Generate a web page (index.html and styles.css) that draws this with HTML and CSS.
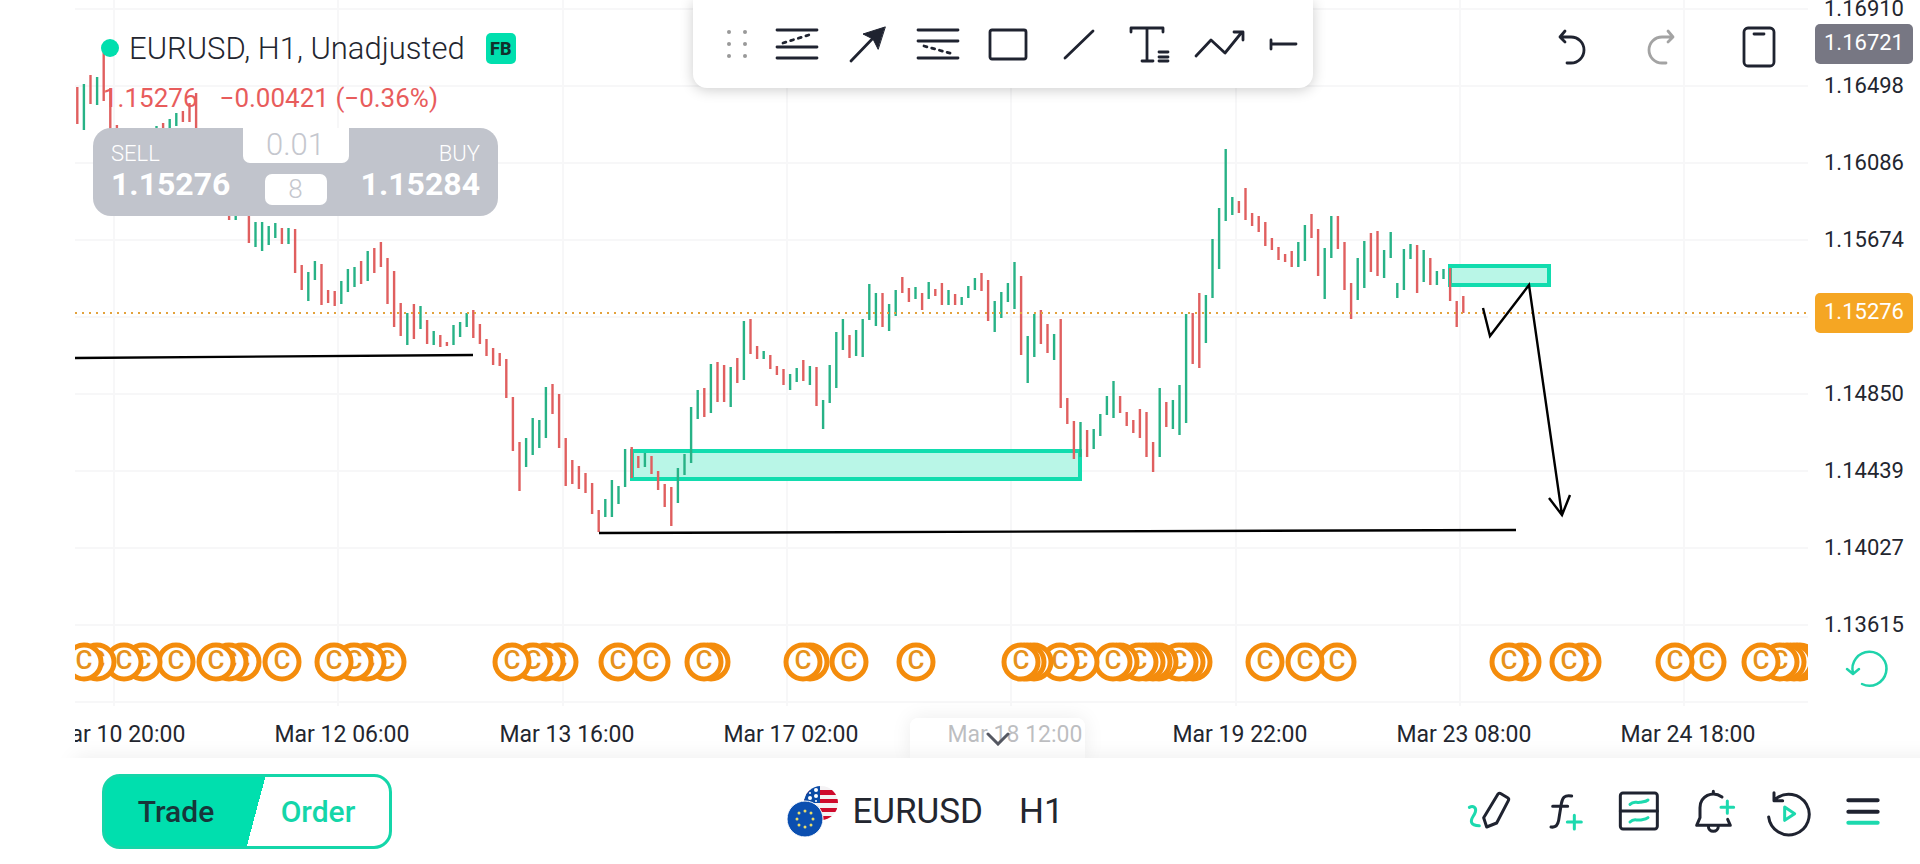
FILE: index.html
```html
<!DOCTYPE html>
<html lang="en">
<head>
    <meta charset="UTF-8">
    <meta name="viewport" content="width=device-width, initial-scale=1.0">
    <title>EURUSD, H1</title>
    <link rel="stylesheet" href="styles.css">
</head>
<body>
    <main class="workspace">
        <section class="chart">
            <svg class="plot" id="plot">
                <g id="grid" class="grid"></g>
                <rect class="zone" x="557" y="451" width="448" height="28"/>
                <rect class="zone" x="1375" y="266" width="99" height="19"/>
                <g id="bars" class="bars"></g>
                <line class="last-price" x1="0" y1="313" x2="100%" y2="313"/>
                <g class="drawing">
                    <path d="M0 358L398 355"/>
                    <path d="M524 533L1441 530"/>
                    <path d="M1408 308L1415 336L1454 285L1487 515M1474 498L1487 515L1495 495"/>
                </g>
                <g id="events" class="events"></g>
                <g id="dates" class="dates"></g>
            </svg>

            <div class="legend">
                <div class="legend-title">
                    <span class="dot"></span>
                    <span>EURUSD, H1, Unadjusted</span>
                    <span class="tag">FB</span>
                </div>
                <div class="quote">
                    <span>1.15276</span>
                    <span>−0.00421 (−0.36%)</span>
                </div>
                <div class="ticket">
                    <button class="side sell"><span>SELL</span><b>1.15276</b></button>
                    <div class="ticket-mid">
                        <input type="text" class="volume" value="0.01" aria-label="Volume">
                        <span class="spread">8</span>
                    </div>
                    <button class="side buy"><span>BUY</span><b>1.15284</b></button>
                </div>
            </div>

            <div class="toolbar">
                <span class="grip">
                    <svg width="22" height="30" viewBox="0 0 22 30"><g fill="#999"><circle cx="3" cy="3" r="2"/><circle cx="19" cy="3" r="2"/><circle cx="3" cy="15" r="2"/><circle cx="19" cy="15" r="2"/><circle cx="3" cy="27" r="2"/><circle cx="19" cy="27" r="2"/></g></svg>
                </span>
                <button class="tool" aria-label="Fibonacci extension">
                    <svg class="icon" viewBox="0 0 44 44"><path d="M2 8H42M2 25H42M2 36H42"/><path stroke-dasharray="3 5" d="M8 21L37 12"/></svg>
                </button>
                <button class="tool" aria-label="Arrow">
                    <svg class="icon" viewBox="0 0 44 44"><path d="M5 39L30 13"/><path class="solid" d="M39 5L17 12L27 17L32 27Z"/></svg>
                </button>
                <button class="tool" aria-label="Fibonacci retracement">
                    <svg class="icon" viewBox="0 0 44 44"><path d="M2 8H42M2 19H42M2 36H42"/><path stroke-dasharray="3 5" d="M8 24L37 32"/></svg>
                </button>
                <button class="tool" aria-label="Rectangle">
                    <svg class="icon" viewBox="0 0 44 44"><rect x="4" y="8" width="36" height="29" rx="2"/></svg>
                </button>
                <button class="tool" aria-label="Trend line">
                    <svg class="icon" viewBox="0 0 44 44"><path d="M8 36L36 9"/></svg>
                </button>
                <button class="tool" aria-label="Text">
                    <svg class="icon" viewBox="0 0 44 44"><path d="M4 10V6H36V10M20 6V39M15 39H26M32 30H41M32 35H41M32 39H41"/></svg>
                </button>
                <button class="tool" aria-label="Path">
                    <svg class="icon" viewBox="0 0 44 44"><path d="M-2 34L13 18L27 31L44 10M36 10H45V18"/></svg>
                </button>
                <button class="tool short" aria-label="Horizontal ray">
                    <svg class="icon" viewBox="0 0 44 44"><path d="M9 18V27M9 22H34"/></svg>
                </button>
            </div>

            <div class="actions">
                <button class="action" aria-label="Undo">
                    <svg class="icon" viewBox="0 0 44 44"><path d="M9 13H20A13 13 0 0 1 20 39H16M14 7L9 13L14 18"/></svg>
                </button>
                <button class="action muted" aria-label="Redo">
                    <svg class="icon" viewBox="0 0 44 44"><path d="M35 13H24A13 13 0 0 0 24 39H28M30 7L35 13L30 18"/></svg>
                </button>
                <button class="action rotate" aria-label="Rotate screen">
                    <svg class="icon" viewBox="0 0 44 44"><rect x="7" y="4" width="30" height="38" rx="4"/><path d="M17 10H27"/></svg>
                </button>
            </div>

            <button class="collapse" aria-label="Collapse">
                <svg width="24" height="14" viewBox="0 0 24 14"><path d="M2 2L12 12L22 2"/></svg>
            </button>
        </section>

        <aside class="prices">
            <span class="price">1.16910</span>
            <span class="price">1.16498</span>
            <span class="price">1.16086</span>
            <span class="price">1.15674</span>
            <span class="price"></span>
            <span class="price">1.14850</span>
            <span class="price">1.14439</span>
            <span class="price">1.14027</span>
            <span class="price">1.13615</span>
            <span class="badge cursor">1.16721</span>
            <span class="badge last">1.15276</span>
            <button class="reset" aria-label="Reset scale">
                <svg width="44" height="44" viewBox="0 0 44 44"><path d="M20 36A17 17 0 1 0 11 25M5 21L11 26L17 21"/></svg>
            </button>
        </aside>
    </main>

    <footer class="bottom-bar">
        <div class="trade-switch">
            <button class="trade">Trade</button>
            <button class="order">Order</button>
        </div>

        <div class="symbol">
            <svg width="54" height="54" viewBox="0 0 54 54">
                <defs><clipPath id="us"><circle cx="35" cy="19" r="17"/></clipPath></defs>
                <g clip-path="url(#us)">
                    <rect x="18" y="2" width="34" height="34" fill="#f4f2f4"/>
                    <path fill="#cf0a2c" d="M18 6H52V11H18ZM18 15H52V19H18ZM18 24H52V28H18ZM18 32H52V36H18Z"/>
                    <rect x="18" y="2" width="16" height="17" fill="#0b4ba5"/>
                    <g fill="#fff"><circle cx="30" cy="6" r="2"/><circle cx="24" cy="9" r="1"/><circle cx="30" cy="12" r="2"/><circle cx="24" cy="14" r="2"/><circle cx="30" cy="17" r="1"/></g>
                </g>
                <circle cx="19" cy="35" r="18" fill="#0b4fb0" stroke="#fff"/>
                <g fill="#e8dc6a"><circle cx="19" cy="27" r="1.5"/><circle cx="25" cy="29" r="1.5"/><circle cx="27" cy="35" r="1.5"/><circle cx="25" cy="41" r="1.5"/><circle cx="19" cy="43" r="1.5"/><circle cx="13" cy="41" r="1.5"/><circle cx="11" cy="35" r="1.5"/><circle cx="13" cy="29" r="1.5"/></g>
            </svg>
            <button class="symbol-name">EURUSD</button>
            <button class="period">H1</button>
        </div>

        <nav class="menu">
            <button class="menu-item" aria-label="Draw">
                <svg viewBox="0 0 144 144"><path class="accent" d="M16 61C28 55 38 62 34 75C30 88 18 96 23 107C26 114 36 116 46 116"/><path d="M102 21Q106 17 111 20L131 32Q136 35 133 41L98 108L68 120L59 92Z"/></svg>
            </button>
            <button class="menu-item" aria-label="Indicators">
                <svg viewBox="0 0 144 144"><path d="M98 27C76 23 70 32 67 50L59 100C56 117 48 122 36 120M41 58H86"/><path class="accent" d="M106 85V126M85 105H127"/></svg>
            </button>
            <button class="menu-item" aria-label="Layout">
                <svg viewBox="0 0 144 144"><rect x="19" y="18" width="111" height="108" rx="8"/><path d="M19 72H130"/><path class="accent" d="M48 52C60 40 66 48 78 46S96 44 102 39M48 105C60 93 66 101 78 99S96 97 102 92"/></svg>
            </button>
            <button class="menu-item" aria-label="Alerts">
                <svg viewBox="0 0 144 144"><path d="M99 30C70 9 33 28 33 62V92L23 115H124L116 97M73 13V21M58 118A15 15 0 0 0 88 118"/><path class="accent" d="M115 42V79M96 61H134"/></svg>
            </button>
            <button class="menu-item" aria-label="Replay">
                <svg viewBox="0 0 144 144"><path d="M14 90A61 61 0 1 0 34 37M30 17V41H56"/><path class="accent" d="M62 60L92 80L62 100Z"/></svg>
            </button>
            <button class="menu-item thick" aria-label="Menu">
                <svg viewBox="0 0 144 144"><path d="M28 40H116M28 74H116"/><path class="accent" d="M28 107H116"/></svg>
            </button>
        </nav>
    </footer>

    <script src="chart.js"></script>
</body>
</html>
```
FILE: styles.css
```css
* {
    box-sizing: border-box;
}

body {
    font-family: Roboto, "Noto Sans", sans-serif;
    margin: 0;
    min-height: 100vh;
    display: flex;
    flex-direction: column;
    background: #fff;
    color: #23262f;
    overflow: hidden;
}

button {
    font: inherit;
    color: inherit;
    background: none;
    border: 0;
    padding: 0;
    cursor: pointer;
}

svg {
    display: block;
}

.workspace {
    flex: 1;
    display: flex;
    padding-left: 75px;
    overflow: hidden;
}

.chart {
    flex: 1;
    position: relative;
}

.plot {
    width: 100%;
    height: 100%;
    position: absolute;
}

.grid {
    stroke: #f7f7f8;
    stroke-width: 2;
}

.bars {
    stroke-width: 2.4;
}

.bars .up {
    stroke: #27b286;
}

.bars .down {
    stroke: #e05f5f;
}

.zone {
    fill: #b9f6e7;
    stroke: #12dcae;
    stroke-width: 4;
}

.last-price {
    stroke: #e3a23c;
    stroke-width: 2;
    stroke-dasharray: 2 5;
}

.drawing {
    fill: none;
    stroke: #000;
    stroke-width: 2.4;
}

.events circle {
    fill: #fff;
    stroke: #f48c0c;
    stroke-width: 5;
}

.events text {
    fill: #e6921c;
    font-size: 26px;
    font-weight: 500;
    text-anchor: middle;
}

.dates text {
    fill: #23262f;
    font-size: 23px;
    text-anchor: middle;
}

/* symbol info and one-click trading */
.legend {
    position: absolute;
    top: 24px;
    left: 18px;
}

.legend-title {
    display: flex;
    align-items: center;
    height: 48px;
    padding-left: 8px;
    gap: 10px;
    font-size: 31px;
    font-weight: 300;
}

.dot {
    width: 18px;
    height: 18px;
    border-radius: 50%;
    background: #00dfae;
}

.tag {
    width: 30px;
    margin-left: 11px;
    border-radius: 5px;
    background: #00dfae;
    color: #10302c;
    font-size: 18px;
    font-weight: 800;
    line-height: 31px;
    text-align: center;
}

.quote {
    display: flex;
    align-items: center;
    gap: 22px;
    height: 52px;
    padding-left: 10px;
    color: #e85c5c;
    font-size: 26px;
}

.ticket {
    display: flex;
    width: 405px;
    height: 88px;
    margin-top: 4px;
    border-radius: 18px;
    background: #c1c4cc;
}

.side {
    flex: 1;
    display: flex;
    flex-direction: column;
    justify-content: center;
    padding: 0 0 2px 18px;
    color: #fff;
    font-size: 22px;
    font-weight: 300;
    line-height: 26px;
}

.side b {
    font-size: 32px;
    font-weight: 700;
    line-height: 34px;
}

.sell {
    align-items: flex-start;
}

.buy {
    align-items: flex-end;
    padding: 0 18px 2px 0;
}

.ticket-mid {
    flex: 0 0 106px;
    display: flex;
    flex-direction: column;
    align-items: center;
    gap: 11px;
}

.volume {
    width: 100%;
    height: 35px;
    padding: 0 0 2px;
    border: 0;
    border-radius: 0 0 7px 7px;
    background: #fff;
    color: #c5c7ce;
    font: 300 31px Roboto, sans-serif;
    text-align: center;
}

.spread {
    width: 62px;
    border-radius: 7px;
    background: #fff;
    color: #c5c7ce;
    font-size: 26px;
    font-weight: 300;
    line-height: 31px;
    text-align: center;
}

/* drawing tools */
.toolbar {
    position: absolute;
    top: 0;
    left: 618px;
    display: flex;
    width: 620px;
    height: 88px;
    border-radius: 0 0 14px 14px;
    background: #fff;
    box-shadow: 0 2px 14px rgba(0, 0, 0, 0.2);
}

.grip {
    flex: 0 0 69px;
    display: flex;
    align-items: center;
    justify-content: flex-end;
    padding-right: 14px;
}

.tool {
    flex: 1;
    display: flex;
    align-items: center;
    justify-content: center;
}

.tool.short {
    flex: 0 0 58px;
}

.icon {
    width: 44px;
    height: 44px;
    overflow: visible;
    fill: none;
    stroke: #1f2330;
    stroke-width: 2.8;
    stroke-linecap: round;
    stroke-linejoin: round;
}

.icon .solid {
    fill: #1f2330;
    stroke-width: 1;
}

.actions {
    position: absolute;
    top: 24px;
    right: 27px;
    display: flex;
    gap: 43px;
}

.rotate {
    margin-left: 12px;
}

.muted .icon {
    stroke: #a3a3a3;
}

.collapse {
    position: absolute;
    bottom: 0;
    left: 835px;
    display: flex;
    align-items: center;
    justify-content: center;
    width: 175px;
    height: 40px;
    padding-top: 2px;
    border-radius: 8px 8px 0 0;
    background: rgba(255, 255, 255, 0.7);
    box-shadow: 0 0 20px rgba(0, 0, 0, 0.08);
}

.collapse path {
    fill: none;
    stroke: #555862;
    stroke-width: 3;
    stroke-linecap: round;
}

/* price scale */
.prices {
    position: relative;
    width: 112px;
    margin-top: -30px;
    display: flex;
    flex-direction: column;
    align-items: center;
    font-size: 22px;
}

.price {
    height: 77px;
    line-height: 77px;
}

.badge {
    position: absolute;
    left: 7px;
    width: 98px;
    height: 40px;
    border-radius: 5px;
    color: #fff;
    line-height: 37px;
    text-align: center;
}

.cursor {
    top: 54px;
    background: #777783;
}

.last {
    top: 323px;
    background: #f5a623;
}

.reset {
    margin-top: -15px;
}

.reset svg {
    overflow: visible;
}

.reset path {
    fill: none;
    stroke: #1fd3ab;
    stroke-width: 2.5;
    stroke-linecap: round;
    stroke-linejoin: round;
}

/* bottom bar */
.bottom-bar {
    position: relative;
    display: flex;
    align-items: center;
    justify-content: space-between;
    height: 106px;
    padding: 0 20px 0 102px;
    background: #fff;
    box-shadow: 75px 0 20px rgba(0, 0, 0, 0.08);
}

.trade-switch {
    display: flex;
    width: 290px;
    height: 75px;
    border: 3px solid #14d6a9;
    border-radius: 18px;
    background: linear-gradient(105deg, #00dfae 0 53%, #fff 53%);
    font-size: 30px;
    font-weight: 500;
}

.trade-switch button {
    flex: 1;
}

.trade {
    color: #17363a;
}

.trade-switch .order {
    color: #14d6a9;
}

.symbol {
    display: flex;
    align-items: center;
    padding-left: 8px;
    font-size: 35px;
}

.symbol-name {
    margin-left: 12px;
}

.period {
    margin-left: 36px;
}

.menu {
    display: flex;
}

.menu-item {
    width: 75px;
    display: flex;
    justify-content: center;
}

.menu-item svg {
    width: 48px;
    height: 48px;
    overflow: visible;
    fill: none;
    stroke: #1f2330;
    stroke-width: 9;
    stroke-linecap: round;
    stroke-linejoin: round;
}

.menu-item .accent {
    stroke: #1cd9ae;
}

.menu-item.thick svg {
    stroke-width: 12;
}
```
FILE: chart.js
```js
const SVG_NS = 'http://www.w3.org/2000/svg';
const STEP = 6.6;

// direction (u/d), top and bottom of every hourly bar
const BARS = `
d87-124 u84-130 d75-104 u77-105 d50-101 d88-135 d125-145 d140-160 u150-170 u145-165
u140-160 u135-150 u126-140 d123-140 u119-135 u113-126 d111-122 d103-122 d93-140 d140-180
d150-190 d160-200 u170-210 d190-220 u190-220 d190-210 d205-243 u222-247 u222-251 u226-245
u223-238 d228-244 u228-244 d229-273 d265-290 u272-301 u261-280 d264-305 d290-303 d291-306
u281-304 u269-292 u267-287 d261-284 u251-281 d248-273 d242-267 d258-304 d271-327 d303-336
u313-345 d304-339 u306-329 d320-344 u331-345 d335-347 d342-346 u325-345 u322-337 u313-327
d310-338 d324-344 d339-356 d348-365 d353-366 d359-398 d397-451 d442-491 u438-467 u418-455
u420-448 u387-438 d384-414 d394-448 d438-486 d460-484 d466-489 d473-493 d483-514 d510-532
u499-517 u480-517 u486-504 u449-487 d447-478 d456-468 u453-467 d456-474 d471-490 d484-507
d487-526 u468-503 u454-475 u407-463 u390-419 d388-417 u364-413 d362-402 d365-402 u367-407
d358-383 u321-380 d319-354 d346-359 u351-359 d355-369 d366-375 d369-385 u374-390 u368-382
d360-381 u366-385 d367-406 u400-429 u365-403 u332-388 u319-350 d335-358 u330-356 u319-357
u284-320 u293-326 d293-327 u304-331 u290-316 d277-293 d288-302 u287-299 d293-310 u282-299
d289-296 d283-305 u290-305 d294-305 u297-305 u286-298 u278-290 d273-291 d280-321 u301-332
u292-318 u283-302 u262-309 d276-355 u336-383 u314-357 d310-344 d324-353 u334-360 d319-408
d398-424 d421-459 u422-457 d430-457 u429-449 u414-436 u396-415 u381-418 d396-413 d412-426
d420-433 d409-438 d412-457 d442-472 u388-457 d402-427 u400-429 u385-435 u314-423 d313-364
d293-368 u295-343 u239-298 u208-269 u149-221 u197-215 d201-213 d188-220 d213-226 d216-232
d222-246 d238-250 d247-260 d254-262 d251-267 u242-267 u225-261 d214-238 d229-276 u248-299
u216-258 d216-249 d242-290 d283-319 u258-300 u241-288 d233-272 d231-276 u250-278 u232-258
u283-298 u249-290 u244-259 d245-293 u250-282 d258-285 u271-285 u269-279 d268-301 d301-327
d296-313`.trim().split(/\s+/);

// economic calendar markers
const EVENTS = [9, 22, 49, 68, 101, 141, 154, 167, 207, 259, 279, 292, 312, 437, 458, 471, 484,
    543, 576, 629, 636, 728, 735, 774, 841, 946, 952, 959, 985, 1005, 1038, 1045, 1064, 1071,
    1078, 1084, 1104, 1111, 1118, 1190, 1230, 1262, 1434, 1447, 1494, 1507, 1600, 1632, 1686,
    1705, 1712, 1719, 1725];

const DATES = ['Mar 10 20:00', 'Mar 12 06:00', 'Mar 13 16:00', 'Mar 17 02:00',
    'Mar 18 12:00', 'Mar 19 22:00', 'Mar 23 08:00', 'Mar 24 18:00'];

function add(parent, name, attrs, text) {
    const el = document.createElementNS(SVG_NS, name);
    for (const key in attrs) {
        el.setAttribute(key, attrs[key]);
    }
    if (text) {
        el.textContent = text;
    }
    parent.appendChild(el);
}

const grid = document.getElementById('grid');
const dates = document.getElementById('dates');
const bars = document.getElementById('bars');
const events = document.getElementById('events');

for (let i = 0; i < 10; i++) {
    const y = 9 + i * 77;
    add(grid, 'line', { x1: 0, y1: y, x2: '100%', y2: y });
}

DATES.forEach((label, i) => {
    const x = Math.round(39 + i * 224.3);
    add(grid, 'line', { x1: x, y1: 0, x2: x, y2: 706 });
    add(dates, 'text', { x: x + 4, y: 742 }, label);
});

BARS.forEach((bar, i) => {
    const [top, bottom] = bar.slice(1).split('-');
    const x = (2.3 + i * STEP).toFixed(1);
    add(bars, 'line', { class: bar[0] === 'u' ? 'up' : 'down', x1: x, y1: top, x2: x, y2: bottom });
});

// earlier events lie over later ones, a letter that would be fully covered is left out
for (let i = EVENTS.length - 1; i >= 0; i--) {
    const x = EVENTS[i];
    add(events, 'circle', { cx: x, cy: 662, r: 17 });
    if (i === 0 || x - EVENTS[i - 1] > 10) {
        add(events, 'text', { x: x, y: 669 }, 'C');
    }
}
```
